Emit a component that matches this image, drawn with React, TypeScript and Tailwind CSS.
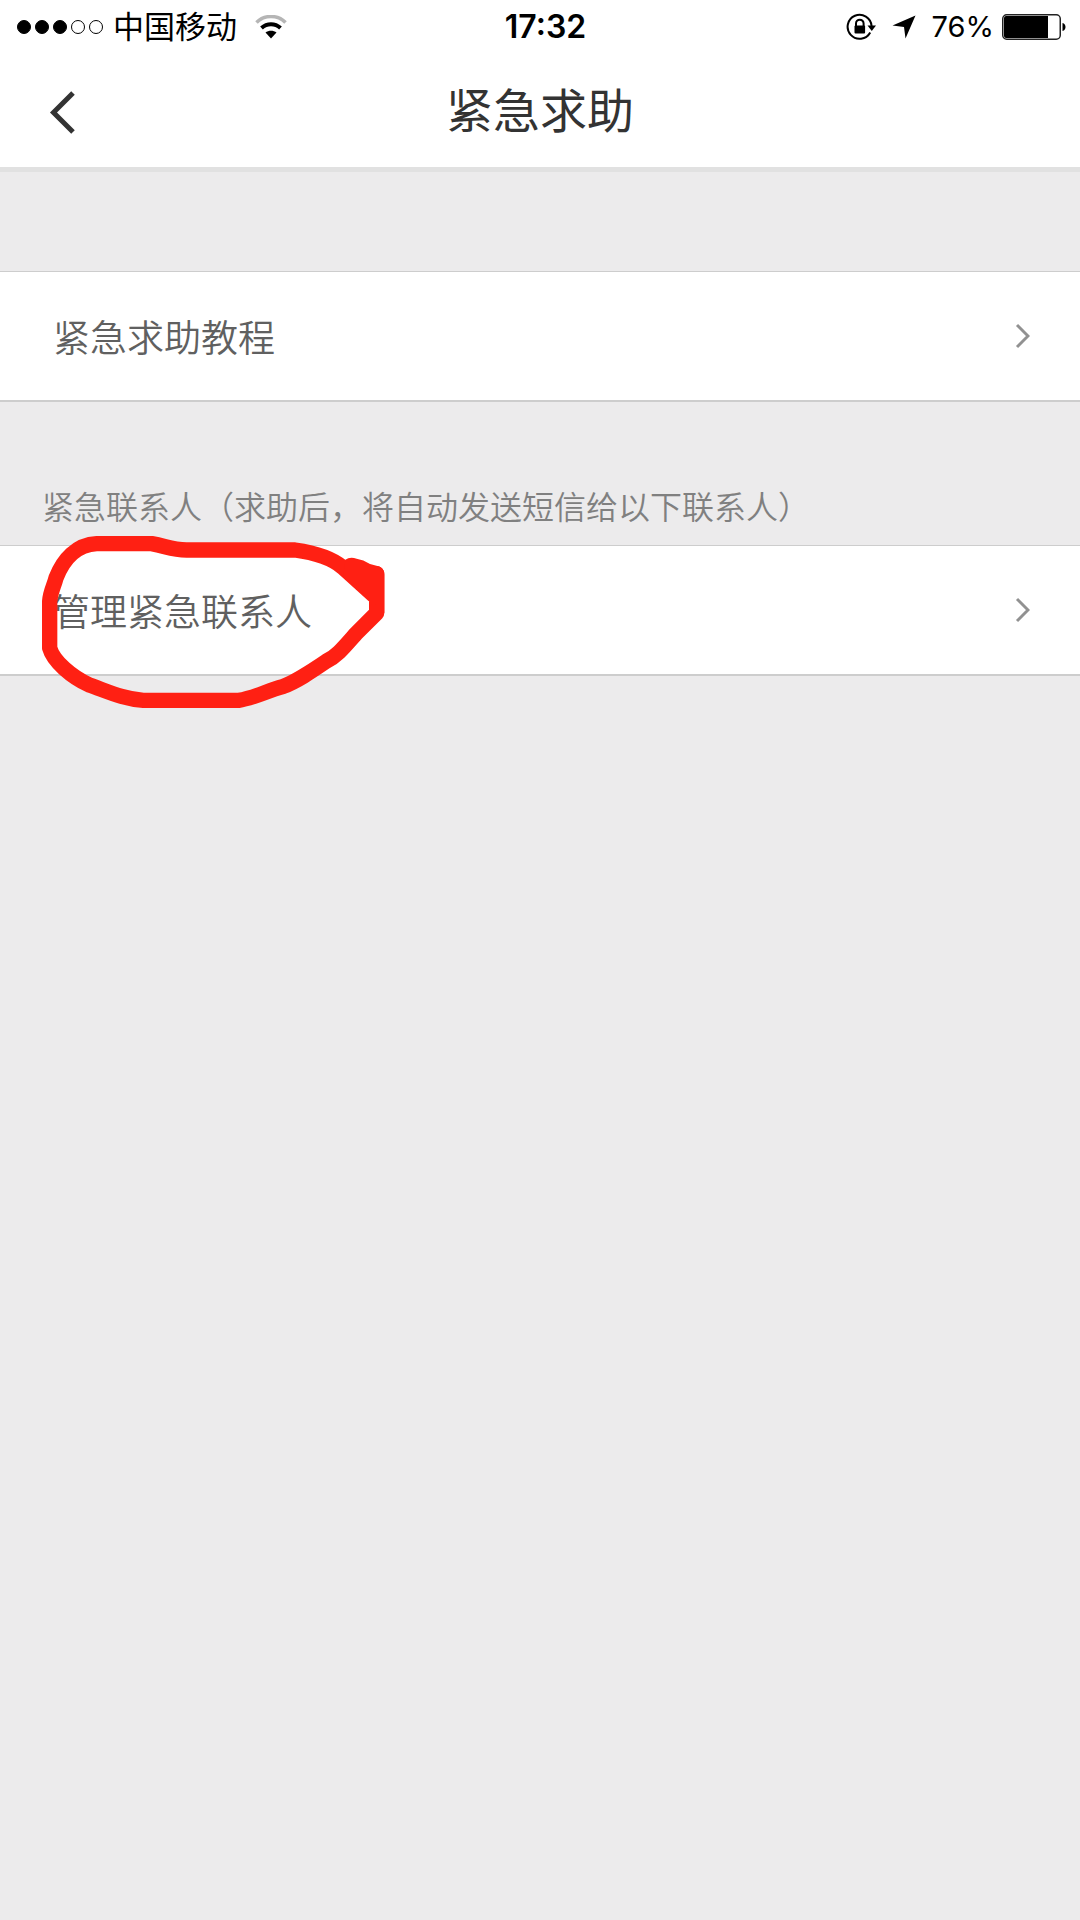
import type { ReactNode } from 'react';

const SIGNAL_DOTS = [true, true, true, false, false];

function WifiIcon() {
  return (
    <svg width="32" height="24" viewBox="0 0 32 24" fill="none" aria-hidden="true">
      <path d="M1.5 7.5C9.5 -0.5 22.5 -0.5 30.5 7.5" stroke="#b5b5b5" strokeWidth="3.6" />
      <path d="M6.5 13C12 8 20 8 25.5 13" stroke="#000" strokeWidth="4" />
      <path d="M10.5 17.5C13.5 15 18.5 15 21.5 17.5L16 23.5Z" fill="#000" />
    </svg>
  );
}

function RotationLockIcon() {
  return (
    <svg width="30" height="28" viewBox="0 0 30 28" fill="none" aria-hidden="true">
      <path d="M24.2 19.5A12 12 0 1 1 25.6 13" stroke="#000" strokeWidth="2" />
      <path d="M21.5 12.5H30L25.8 18Z" fill="#000" />
      <path d="M10 13V10.5a3.8 3.8 0 0 1 7.6 0V13" stroke="#000" strokeWidth="2" />
      <rect x="8.5" y="12.5" width="10.6" height="8" rx="1" fill="#000" />
    </svg>
  );
}

function LocationIcon() {
  return (
    <svg width="24" height="24" viewBox="0 0 24 24" aria-hidden="true">
      <path d="M23.5 0.5L13.5 23.5L12 12L0.5 10.5Z" fill="#000" />
    </svg>
  );
}

function BatteryIcon() {
  return (
    <svg width="64" height="26" viewBox="0 0 64 26" fill="none" aria-hidden="true">
      <rect x="0.75" y="0.75" width="57.5" height="24.5" rx="4" stroke="#222" strokeWidth="1.5" />
      <path d="M4 2H46V24H4A2 2 0 0 1 2 22V4A2 2 0 0 1 4 2Z" fill="#000" />
      <path d="M60.5 9C64.5 10 64.5 16 60.5 17Z" fill="#000" />
    </svg>
  );
}

function StatusBar() {
  return (
    <div className="grid h-[54px] grid-cols-[1fr_auto_1fr] items-center pl-[17px] pr-[14px] text-black">
      <div className="flex items-center">
        <div className="flex gap-1">
          {SIGNAL_DOTS.map((filled, i) => (
            <span
              key={i}
              className={
                filled
                  ? 'size-[14px] rounded-full border border-black bg-black'
                  : 'size-[14px] rounded-full border border-black'
              }
            />
          ))}
        </div>
        <span className="ml-[10px] mr-[18px] text-[31px] leading-[54px]">中国移动</span>
        <WifiIcon />
      </div>
      <span className="pl-2 text-[32px] font-semibold leading-[54px]">17:32</span>
      <div className="flex items-center justify-end">
        <RotationLockIcon />
        <span className="ml-4 mr-4">
          <LocationIcon />
        </span>
        <span className="mr-2 text-[29px] leading-[54px]">76%</span>
        <BatteryIcon />
      </div>
    </div>
  );
}

function NavBar() {
  return (
    <div className="relative flex h-[113px] items-center justify-center">
      <button type="button" aria-label="返回" className="absolute left-12 top-9 cursor-pointer">
        <svg width="28" height="44" viewBox="0 0 28 44" fill="none" aria-hidden="true">
          <path d="M25 3L5.5 22.5L25 42" stroke="#333" strokeWidth="5" />
        </svg>
      </button>
      <h1 className="text-[47px] leading-[112px] text-[#333]">紧急求助</h1>
    </div>
  );
}

function ListRow({ label, children }: { label: string; children?: ReactNode }) {
  return (
    <div className="relative">
      <button
        type="button"
        className="flex h-[131px] w-full cursor-pointer items-center justify-between border-b-2 border-t border-[#cdcdcd] bg-white pl-[53px] pr-[50px] text-left"
      >
        <span className="pt-[5px] text-[37px] font-[350] leading-[56px] text-[#606060]">{label}</span>
        <svg width="15" height="26" viewBox="0 0 15 26" fill="none" aria-hidden="true">
          <path d="M2 2L13 13L2 24" stroke="#919191" strokeWidth="3" />
        </svg>
      </button>
      {children}
    </div>
  );
}

// Hand-drawn marker circle around a row label
function MarkerCircle() {
  return (
    <svg
      className="pointer-events-none absolute -top-3 left-10"
      width="347"
      height="180"
      viewBox="120 190 1041 540"
      fill="none"
      aria-hidden="true"
    >
      <path
        d="M1130 312V430L1068 492C1030 535 1010 560 980 574C930 608 890 635 848 651C800 664 760 686 716 692H430C370 688 325 666 268 646C215 622 160 575 149 535V395C151 365 162 350 168 325C190 268 230 225 290 222H455C500 230 515 241 560 241H885C950 250 995 265 1028 293L1120 376"
        stroke="#ff2013"
        strokeWidth="46"
        strokeLinecap="round"
        strokeLinejoin="round"
      />
      <path
        d="M1036 270Q1050 260 1070 267Q1090 270 1110 283L1135 290Q1153 296 1153 315V430L1107 386L1030 320Z"
        fill="#ff2013"
      />
    </svg>
  );
}

export default function App() {
  return (
    <div className="min-h-screen bg-[#ecebec] font-['Inter','Noto_Sans_CJK_SC',sans-serif]">
      <header className="bg-white">
        <StatusBar />
        <NavBar />
      </header>
      <main>
        <div className="h-[104px] border-t-[5px] border-[#e1e1e1]" />
        <ListRow label="紧急求助教程" />
        <h2 className="px-[42px] pb-[14px] pt-[82px] text-[32px] font-[350] leading-[47px] text-[#808080]">
          紧急联系人（求助后，将自动发送短信给以下联系人）
        </h2>
        <ListRow label="管理紧急联系人">
          <MarkerCircle />
        </ListRow>
      </main>
    </div>
  );
}
